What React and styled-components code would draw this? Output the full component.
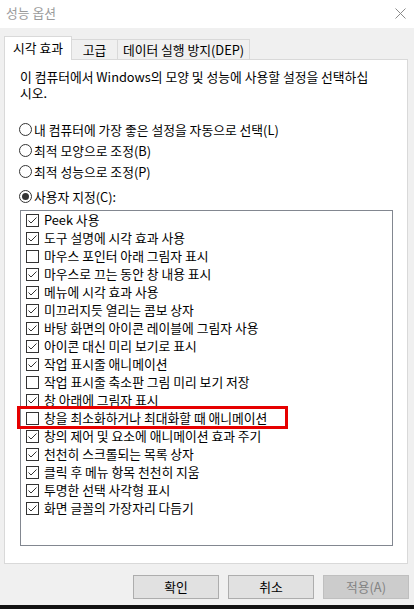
import React from 'react'
import styled, { createGlobalStyle } from 'styled-components'

const Global = createGlobalStyle`
  html, body {
    margin: 0;
    padding: 0;
    background: #f0f0f0;
  }
  body {
    font-family: "Noto Sans CJK KR", "Noto Sans", sans-serif;
    font-size: 12.8px;
    color: #000;
    overflow: hidden;
  }
  * { box-sizing: border-box; }
`

const Window = styled.div`
  width: 414px;
  height: 609px;
  background: #f0f0f0;
  display: flex;
  flex-direction: column;
`
const TitleBar = styled.div`
  height: 28px;
  background: #fff;
  display: flex;
  align-items: center;
  justify-content: space-between;
  padding: 0 8px 2px 6px;
`
const Title = styled.span`
  color: #9b9b9b;
  line-height: 16px;
`
const TabStrip = styled.div`
  height: 31px;
  display: flex;
  align-items: flex-end;
  padding-left: 4px;
`
const Tab = styled.div`
  width: ${p => p.w}px;
  height: ${p => (p.active ? 24 : 20)}px;
  margin-bottom: ${p => (p.active ? -1 : 0)}px;
  margin-left: ${p => (p.first ? 0 : -1)}px;
  position: relative;
  z-index: ${p => (p.active ? 1 : 0)};
  background: ${p => (p.active ? '#fff' : '#f0f0f0')};
  border: 1px solid #d9d9d9;
  border-bottom: none;
  display: flex;
  align-items: ${p => (p.active ? 'flex-start' : 'center')};
  padding-top: ${p => (p.active ? 3 : 0)}px;
  justify-content: center;
  line-height: 16px;
  white-space: nowrap;
`
const Panel = styled.div`
  margin-left: 4px;
  width: 404px;
  height: 505px;
  background: #fff;
  border: 1px solid #d9d9d9;
  padding: 9px 10px 0 15px;
  display: flex;
  flex-direction: column;
`
const Intro = styled.p`
  margin: 0;
  line-height: 16px;
  white-space: nowrap;
`
const RadioGroup = styled.div`
  margin-top: 18px;
  display: flex;
  flex-direction: column;
`
const RadioRow = styled.div`
  height: 21px;
  margin-top: ${p => p.extra || 0}px;
  display: flex;
  align-items: center;
  margin-left: -1px;
  gap: 2px;
  line-height: 16px;
`
const RadioCircle = styled.span`
  width: 13px;
  height: 13px;
  border: 1px solid #333;
  border-radius: 50%;
  display: flex;
  align-items: center;
  justify-content: center;
  flex: none;
  &::after {
    content: '';
    width: 7px;
    height: 7px;
    border-radius: 50%;
    background: ${p => (p.on ? '#333' : 'transparent')};
  }
`
const ListBox = styled.div`
  margin-top: 3px;
  width: 373px;
  height: 336px;
  border: 1px solid #828790;
  display: flex;
  flex-direction: column;
`
const Item = styled.div`
  height: 18px;
  display: flex;
  align-items: center;
  padding-left: 5px;
  gap: 5px;
  position: relative;
  line-height: 16px;
  white-space: nowrap;
`
const Box = styled.span`
  width: 13px;
  height: 13px;
  border: 1px solid #333;
  background: #fff;
  flex: none;
  display: flex;
`
const Highlight = styled.span`
  position: absolute;
  left: -4px;
  top: -3px;
  width: 271px;
  height: 23px;
  border: 3px solid #e60000;
  pointer-events: none;
`
const ButtonRow = styled.div`
  margin-top: 11px;
  display: flex;
  justify-content: flex-end;
  gap: 9px;
  padding-right: 5px;
`
const Button = styled.div`
  width: 86px;
  height: 24px;
  border: 1px solid ${p => (p.disabled ? '#bfbfbf' : '#adadad')};
  background: ${p => (p.disabled ? '#cccccc' : '#e1e1e1')};
  color: ${p => (p.disabled ? '#838383' : '#000')};
  display: flex;
  align-items: center;
  justify-content: center;
  line-height: 16px;
`
const Spacer = styled.div`
  flex: 1;
`
const BottomEdge = styled.div`
  height: 4px;
  background: #121212;
`

const Check = () => (
  <svg width="11" height="11" viewBox="0 0 11 11">
    <polyline points="1.5,5.5 4,8 9.5,2.5" fill="none" stroke="#333" strokeWidth="1" />
  </svg>
)

const Close = () => (
  <svg width="11" height="11" viewBox="0 0 11 11">
    <path d="M0.5 0.5 L10.5 10.5 M10.5 0.5 L0.5 10.5" stroke="#8a8a8a" strokeWidth="1" />
  </svg>
)

const radios = [
  { label: '내 컴퓨터에 가장 좋은 설정을 자동으로 선택(L)' },
  { label: '최적 모양으로 조정(B)' },
  { label: '최적 성능으로 조정(P)' },
  { label: '사용자 지정(C):', on: true, extra: 4 },
]

const effects = [
  ['Peek 사용', true],
  ['도구 설명에 시각 효과 사용', true],
  ['마우스 포인터 아래 그림자 표시', false],
  ['마우스로 끄는 동안 창 내용 표시', true],
  ['메뉴에 시각 효과 사용', true],
  ['미끄러지듯 열리는 콤보 상자', true],
  ['바탕 화면의 아이콘 레이블에 그림자 사용', true],
  ['아이콘 대신 미리 보기로 표시', true],
  ['작업 표시줄 애니메이션', true],
  ['작업 표시줄 축소판 그림 미리 보기 저장', false],
  ['창 아래에 그림자 표시', true],
  ['창을 최소화하거나 최대화할 때 애니메이션', false, true],
  ['창의 제어 및 요소에 애니메이션 효과 주기', true],
  ['천천히 스크롤되는 목록 상자', true],
  ['클릭 후 메뉴 항목 천천히 지움', true],
  ['투명한 선택 사각형 표시', true],
  ['화면 글꼴의 가장자리 다듬기', true],
]

export default function App() {
  return (
    <>
      <Global />
      <Window>
        <TitleBar>
          <Title>성능 옵션</Title>
          <Close />
        </TitleBar>
        <TabStrip>
          <Tab active first w={68}>시각 효과</Tab>
          <Tab w={47}>고급</Tab>
          <Tab w={133}>데이터 실행 방지(DEP)</Tab>
        </TabStrip>
        <Panel>
          <Intro>
            이 컴퓨터에서 Windows의 모양 및 성능에 사용할 설정을 선택하십
            <br />
            시오.
          </Intro>
          <RadioGroup>
            {radios.map(r => (
              <RadioRow key={r.label} extra={r.extra}>
                <RadioCircle on={r.on} />
                {r.label}
              </RadioRow>
            ))}
          </RadioGroup>
          <ListBox>
            {effects.map(([label, checked, marked]) => (
              <Item key={label}>
                <Box>{checked && <Check />}</Box>
                {label}
                {marked && <Highlight />}
              </Item>
            ))}
          </ListBox>
        </Panel>
        <ButtonRow>
          <Button>확인</Button>
          <Button>취소</Button>
          <Button disabled>적용(A)</Button>
        </ButtonRow>
        <Spacer />
        <BottomEdge />
      </Window>
    </>
  )
}
